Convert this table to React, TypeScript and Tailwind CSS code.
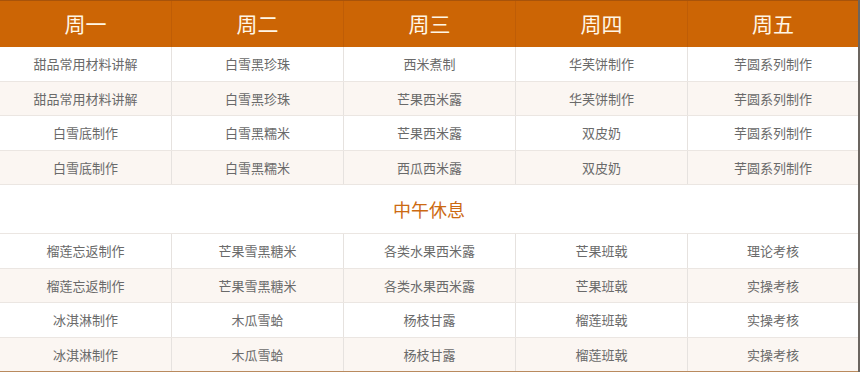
import React from "react";

const days = ["周一", "周二", "周三", "周四", "周五"];
const morning = [
  ["甜品常用材料讲解", "白雪黑珍珠", "西米煮制", "华芙饼制作", "芋圆系列制作"],
  ["甜品常用材料讲解", "白雪黑珍珠", "芒果西米露", "华芙饼制作", "芋圆系列制作"],
  ["白雪底制作", "白雪黑糯米", "芒果西米露", "双皮奶", "芋圆系列制作"],
  ["白雪底制作", "白雪黑糯米", "西瓜西米露", "双皮奶", "芋圆系列制作"],
];
const afternoon = [
  ["榴莲忘返制作", "芒果雪黑糖米", "各类水果西米露", "芒果班戟", "理论考核"],
  ["榴莲忘返制作", "芒果雪黑糖米", "各类水果西米露", "芒果班戟", "实操考核"],
  ["冰淇淋制作", "木瓜雪蛤", "杨枝甘露", "榴莲班戟", "实操考核"],
  ["冰淇淋制作", "木瓜雪蛤", "杨枝甘露", "榴莲班戟", "实操考核"],
];

function Row({ cells, alt, last }: { cells: string[]; alt: boolean; last?: boolean }) {
  return (
    <div
      className={`grid grid-cols-[172px_172px_172px_172px_1fr] h-[34.5px] ${alt ? "bg-[#fbf6f2]" : "bg-white"} ${
        last ? "border-b border-[#b98a5e]" : "border-b border-[#ebe6e2]"
      }`}
    >
      {cells.map((c, i) => (
        <div
          key={i}
          className={`flex items-center justify-center text-[13px] text-[#6a6a6a] ${
            i < 4 ? "border-r border-[#e6e2df]" : ""
          }`}
        >
          {c}
        </div>
      ))}
    </div>
  );
}

export default function App() {
  return (
    <div
      className="w-[860px] h-[372px] bg-white overflow-hidden"
      style={{ fontFamily: '"Noto Sans CJK SC", "Noto Sans", sans-serif' }}
    >
      <div className="w-[860px] border-r-2 border-[#6b6560] h-[372px]">
        <div className="grid grid-cols-[172px_172px_172px_172px_1fr] h-[47px] bg-[#cc6505] border-t border-[#a8530a]">
          {days.map((d, i) => (
            <div
              key={d}
              className={`flex items-center justify-center text-[21px] text-[#fff6e6] ${
                i < 4 ? "border-r border-[#bf5d06]" : ""
              }`}
            >
              {d}
            </div>
          ))}
        </div>
        {morning.map((r, i) => (
          <Row key={i} cells={r} alt={i % 2 === 1} />
        ))}
        <div className="h-[49px] flex items-center justify-center border-b border-[#ebe6e2] text-[18px] text-[#cc6a12]">
          中午休息
        </div>
        {afternoon.map((r, i) => (
          <Row key={i} cells={r} alt={i % 2 === 1} last={i === 3} />
        ))}
      </div>
    </div>
  );
}
